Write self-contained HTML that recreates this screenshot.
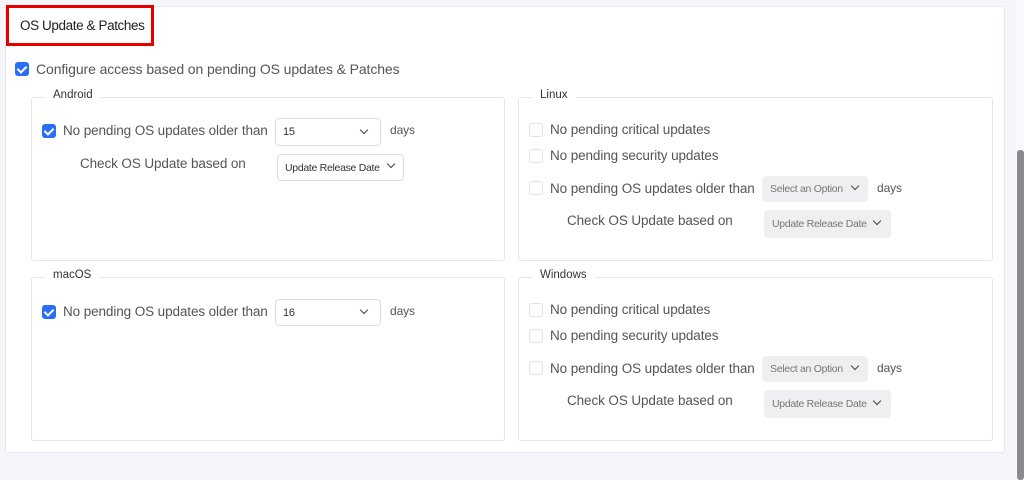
<!DOCTYPE html><html><head><style>
*{box-sizing:border-box;margin:0;padding:0}
body{width:1024px;height:480px;background:#f5f6fa;font-family:"Liberation Sans",sans-serif;position:relative;overflow:hidden;color:#555}
.a{position:absolute}
.card{left:5px;top:6px;width:1000px;height:447px;background:#fff;border:1px solid #e8e9ee;border-radius:3px}
.red{left:6px;top:5px;width:148px;height:41px;border:3px solid #e60000;background:#fff;font-size:13.5px;color:#222;padding:10px 0 0 11px;letter-spacing:-0.4px;white-space:nowrap}
.fs{border:1px solid #e4e5ea;border-radius:3px;background:#fff}
.lg{font-size:11.5px;color:#333;background:#fff;padding:0 8px}
.t{font-size:13.5px;color:#555;white-space:nowrap;letter-spacing:-0.1px}
.cb{width:14px;height:14px;border-radius:3px;background:#2b6ef6}
.cb:after{content:"";position:absolute;left:4px;top:2px;width:4px;height:7px;border:solid #fff;border-width:0 2px 2px 0;transform:rotate(45deg)}
.ucb{width:14px;height:14px;border-radius:3px;border:1px solid #e2e3e8;background:#fff}
.sel{border:1px solid #dcdde2;border-radius:4px;background:#fff;font-size:11px;color:#333;padding:0 0 0 7px;display:flex;align-items:center;white-space:nowrap;letter-spacing:-0.3px}
.sm{font-size:10.5px}
.dis{background:#efeff2;border:1px solid #efeff2;color:#777}
.chev{position:absolute;width:6px;height:6px;border:solid #444;border-width:0 1.4px 1.4px 0;transform:rotate(45deg)}
.sb{left:1016px;top:0;width:8px;height:480px;background:#fafafa}
.th{left:1017px;top:150px;width:7px;height:330px;background:#8a8a8a;border-radius:3px}
</style></head><body>
<div class="a card"></div>
<div class="a red">OS Update &amp; Patches</div>
<div class="a cb" style="left:15px;top:62px"></div>
<div class="a t" style="left:36px;top:61px;font-size:14px">Configure access based on pending OS updates &amp; Patches</div>

<div class="a fs" style="left:31px;top:97px;width:474px;height:164px"></div>
<div class="a lg" style="left:45px;top:89px">Android</div>
<div class="a cb" style="left:42px;top:124px"></div>
<div class="a t" style="left:63px;top:123px">No pending OS updates older than</div>
<div class="a sel" style="left:275px;top:118px;width:106px;height:28px">15</div><div class="a chev" style="left:361px;top:127px"></div>
<div class="a t" style="left:390px;top:123px;font-size:12px">days</div>
<div class="a t" style="left:80px;top:156px">Check OS Update based on</div>
<div class="a sel sm" style="left:277px;top:154px;width:127px;height:27px">Update Release Date</div><div class="a chev" style="left:388px;top:161px"></div>

<div class="a fs" style="left:518px;top:97px;width:475px;height:164px"></div>
<div class="a lg" style="left:532px;top:89px">Linux</div>
<div class="a ucb" style="left:529px;top:123px"></div>
<div class="a t" style="left:550px;top:122px">No pending critical updates</div>
<div class="a ucb" style="left:529px;top:149px"></div>
<div class="a t" style="left:550px;top:148px">No pending security updates</div>
<div class="a ucb" style="left:529px;top:181px"></div>
<div class="a t" style="left:550px;top:181px">No pending OS updates older than</div>
<div class="a sel dis sm" style="left:762px;top:176px;width:106px;height:26px">Select an Option</div><div class="a chev" style="left:852px;top:183px"></div>
<div class="a t" style="left:877px;top:181px;font-size:12px">days</div>
<div class="a t" style="left:567px;top:213px">Check OS Update based on</div>
<div class="a sel dis sm" style="left:764px;top:210px;width:127px;height:28px">Update Release Date</div><div class="a chev" style="left:874px;top:218px"></div>

<div class="a fs" style="left:31px;top:277px;width:474px;height:164px"></div>
<div class="a lg" style="left:45px;top:269px">macOS</div>
<div class="a cb" style="left:42px;top:305px"></div>
<div class="a t" style="left:63px;top:304px">No pending OS updates older than</div>
<div class="a sel" style="left:275px;top:299px;width:106px;height:27px">16</div><div class="a chev" style="left:361px;top:307px"></div>
<div class="a t" style="left:390px;top:304px;font-size:12px">days</div>

<div class="a fs" style="left:518px;top:277px;width:475px;height:164px"></div>
<div class="a lg" style="left:532px;top:269px">Windows</div>
<div class="a ucb" style="left:529px;top:303px"></div>
<div class="a t" style="left:550px;top:302px">No pending critical updates</div>
<div class="a ucb" style="left:529px;top:329px"></div>
<div class="a t" style="left:550px;top:328px">No pending security updates</div>
<div class="a ucb" style="left:529px;top:361px"></div>
<div class="a t" style="left:550px;top:361px">No pending OS updates older than</div>
<div class="a sel dis sm" style="left:762px;top:356px;width:106px;height:26px">Select an Option</div><div class="a chev" style="left:852px;top:363px"></div>
<div class="a t" style="left:877px;top:361px;font-size:12px">days</div>
<div class="a t" style="left:567px;top:393px">Check OS Update based on</div>
<div class="a sel dis sm" style="left:764px;top:390px;width:127px;height:28px">Update Release Date</div><div class="a chev" style="left:874px;top:398px"></div>

<div class="a sb"></div><div class="a th"></div>
</body></html>
